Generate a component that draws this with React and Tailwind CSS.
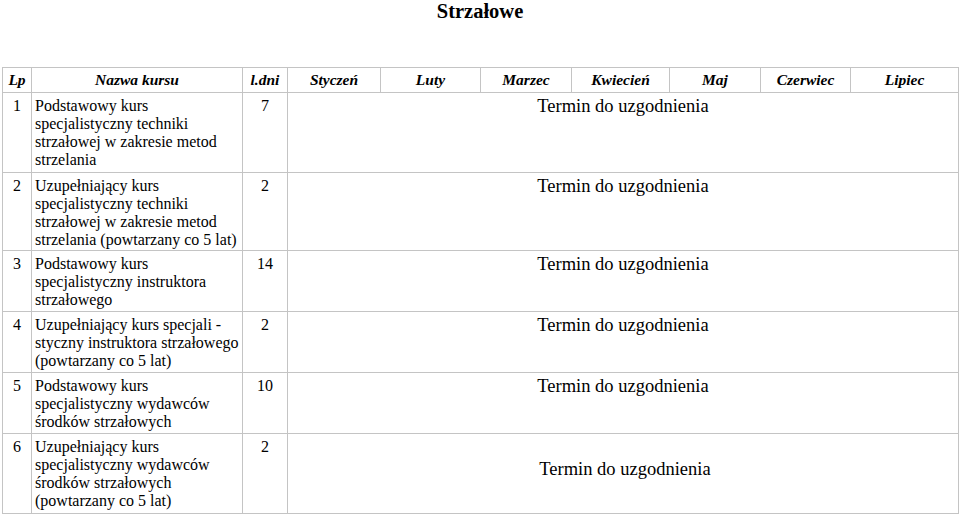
import React from 'react';

const months = ['Styczeń', 'Luty', 'Marzec', 'Kwiecień', 'Maj', 'Czerwiec', 'Lipiec'];

const rows = [
  { lp: 1, h: 'h-[80px]', name: ['Podstawowy kurs', 'specjalistyczny techniki', 'strzałowej w zakresie metod', 'strzelania'], dni: 7 },
  { lp: 2, h: 'h-[78px]', name: ['Uzupełniający kurs', 'specjalistyczny techniki', 'strzałowej w zakresie metod', 'strzelania (powtarzany co 5 lat)'], dni: 2 },
  { lp: 3, h: 'h-[61px]', name: ['Podstawowy kurs', 'specjalistyczny instruktora', 'strzałowego'], dni: 14 },
  { lp: 4, h: 'h-[61px]', name: ['Uzupełniający kurs specjali -', 'styczny instruktora strzałowego', '(powtarzany co 5 lat)'], dni: 2 },
  { lp: 5, h: 'h-[61px]', name: ['Podstawowy kurs', 'specjalistyczny wydawców', 'środków strzałowych'], dni: 10 },
  { lp: 6, h: 'h-[80px]', name: ['Uzupełniający kurs', 'specjalistyczny wydawców', 'środków strzałowych', '(powtarzany co 5 lat)'], dni: 2, middle: true },
];

const cell = 'border border-[#c4c4c4]';

export default function App() {
  return (
    <div className="bg-white text-black min-h-[515px]" style={{ fontFamily: '"Liberation Serif", "Times New Roman", serif' }}>
      <h1 className="text-center text-[20.5px] font-bold leading-[22px] h-[67px]">Strzałowe</h1>

      <table className="ml-[2px] w-[956px] table-fixed border-collapse">
        <colgroup>
          <col className="w-[29px]" />
          <col className="w-[211px]" />
          <col className="w-[45px]" />
          <col className="w-[93px]" />
          <col className="w-[100px]" />
          <col className="w-[91px]" />
          <col className="w-[98px]" />
          <col className="w-[91px]" />
          <col className="w-[90px]" />
          <col className="w-[108px]" />
        </colgroup>
        <thead>
          <tr className="h-[25px] text-[15.5px] italic font-bold leading-[18px]">
            <th className={cell + ' text-center'}>Lp</th>
            <th className={cell + ' text-center'}>Nazwa kursu</th>
            <th className={cell + ' text-center'}>l.dni</th>
            {months.map(m => (
              <th key={m} className={cell + ' text-center'}>{m}</th>
            ))}
          </tr>
        </thead>
        <tbody className="text-[16px] leading-[18px]">
          {rows.map(r => (
            <tr key={r.lp} className={r.h}>
              <td className={cell + ' align-top text-center pt-[4px] pb-0'}>{r.lp}</td>
              <td className={cell + ' align-top pl-[3px] pt-[4px] pb-0'}>
                {r.name.map((l, i) => (
                  <div key={i} className="whitespace-nowrap">{l}</div>
                ))}
              </td>
              <td className={cell + ' align-top text-center pt-[4px] pb-0'}>{r.dni}</td>
              <td
                colSpan={7}
                className={cell + ' text-center text-[18.5px] leading-[21px] ' + (r.middle ? 'align-middle pb-[8px] pl-[4px]' : 'align-top pt-[3px]')}
              >
                Termin do uzgodnienia
              </td>
            </tr>
          ))}
        </tbody>
      </table>
    </div>
  );
}
